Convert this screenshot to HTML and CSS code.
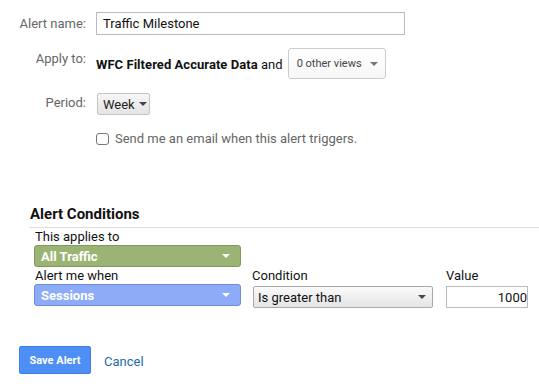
FILE: index.html
```html
<!DOCTYPE html>
<html>
<head>
<meta charset="utf-8">
<link rel="stylesheet" href="styles.css">
</head>
<body>
<div class="form">
  <div class="row row-name">
    <div class="label">Alert name:</div>
    <div class="text-input">Traffic Milestone</div>
  </div>
  <div class="row row-apply">
    <div class="label">Apply to:</div>
    <div class="value"><b>WFC Filtered Accurate Data</b> and</div>
    <div class="views-btn">0 other views <span class="caret caret-gray"></span></div>
  </div>
  <div class="row row-period">
    <div class="label">Period:</div>
    <div class="week-btn">Week <span class="caret caret-dark"></span></div>
  </div>
  <div class="row row-check">
    <div class="label"></div>
    <span class="checkbox"></span>
    <span class="check-text">Send me an email when this alert triggers.</span>
  </div>
</div>

<div class="conditions">
  <div class="cond-title">Alert Conditions</div>
  <div class="cond-grid">
    <div class="cond-label">This applies to</div>
    <div class="empty"></div>
    <div class="empty"></div>
    <div class="pill pill-green">All Traffic <span class="caret caret-white"></span></div>
    <div class="empty"></div>
    <div class="empty"></div>
    <div class="cond-label">Alert me when</div>
    <div class="cond-label cond-label-tight">Condition</div>
    <div class="cond-label cond-label-value">Value</div>
    <div class="pill pill-blue">Sessions <span class="caret caret-white"></span></div>
    <div class="select">Is greater than <span class="caret caret-dark"></span></div>
    <div class="num-input">1000</div>
  </div>
</div>

<div class="actions">
  <div class="save-btn">Save Alert</div>
  <div class="cancel">Cancel</div>
</div>
</body>
</html>
```

FILE: styles.css
```css
body {
  margin: 0;
  font-family: Roboto, "Liberation Sans", Arial, sans-serif;
  font-size: 13px;
  color: #222;
  background: #fff;
}

.form {
  padding-top: 12px;
}

.row {
  display: flex;
  align-items: flex-start;
}

.label {
  width: 86px;
  margin-right: 10px;
  text-align: right;
  color: #666;
  font-size: 13px;
  flex: none;
}

.row-name .label { padding-top: 4px; }

.text-input {
  box-sizing: border-box;
  width: 309px;
  height: 23px;
  border: 1px solid #bbb;
  padding: 3px 6px 0;
  font-size: 13px;
  color: #111;
}

.row-apply {
  margin-top: 13px;
  align-items: center;
}
.row-apply .label { align-self: flex-start; padding-top: 3px; }

.value {
  font-size: 13px;
  color: #111;
  padding-top: 1px;
  letter-spacing: 0.05px;
}
.value b { font-weight: 700; }

.views-btn {
  box-sizing: border-box;
  margin-left: 5px;
  width: 98px;
  height: 31px;
  border: 1px solid #ccc;
  border-radius: 3px;
  background: linear-gradient(#fff, #f7f7f7);
  display: flex;
  align-items: center;
  justify-content: space-between;
  padding: 0 7px 0 8px;
  font-size: 11px;
  color: #444;
}

.row-period {
  margin-top: 14px;
}
.row-period .label { padding-top: 2px; }

.week-btn {
  box-sizing: border-box;
  margin-left: 1px;
  width: 53px;
  height: 22px;
  border: 1px solid #c4c4c4;
  border-radius: 2px;
  background: linear-gradient(#f6f6f6, #e4e4e4);
  display: flex;
  align-items: center;
  gap: 4px;
  padding-left: 5px;
  font-size: 13px;
  color: #222;
}

.row-check {
  margin-top: 16px;
  align-items: center;
}

.checkbox {
  box-sizing: border-box;
  width: 13px;
  height: 12px;
  border: 1px solid #777;
  border-radius: 3px;
  background: #fff;
  margin-right: 6px;
  flex: none;
}

.check-text {
  color: #666;
  font-size: 13px;
}

.caret {
  display: inline-block;
  width: 0;
  height: 0;
  border-left: 4px solid transparent;
  border-right: 4px solid transparent;
  border-top: 4px solid #777;
}
.caret-gray { border-top-color: #777; }
.caret-dark { border-top-color: #445; }
.caret-white { border-top-color: #fff; }

.conditions {
  margin-left: 29px;
  margin-top: 60px;
}

.cond-title {
  font-weight: 700;
  font-size: 15px;
  line-height: 17px;
  color: #111;
  padding-left: 1px;
  padding-bottom: 4px;
  border-bottom: 1px solid #ddd;
}

.cond-grid {
  display: grid;
  grid-template-columns: 207px 180px 83px;
  column-gap: 12px;
  padding-left: 5px;
  align-items: start;
}

.cond-label {
  font-size: 13px;
  line-height: 17px;
  color: #111;
  padding-left: 1px;
}
.cond-label-tight {
  padding-left: 0;
  margin-left: -1px;
}
.cond-label-value {
  padding-left: 0;
  margin-left: 1px;
}

.pill {
  box-sizing: border-box;
  height: 22px;
  border-radius: 3px;
  display: flex;
  align-items: center;
  justify-content: space-between;
  padding: 0 10px 0 6px;
  color: #fff;
  font-weight: 700;
  font-size: 13px;
}
.pill-green {
  background: #9bb474;
  border: 1px solid #7f9a5d;
}
.pill-blue {
  background: #8eabf7;
  border: 1px solid #6e8bd8;
}

.select {
  box-sizing: border-box;
  height: 22px;
  margin-top: 2px;
  border: 1px solid #aaa;
  border-radius: 2px;
  background: linear-gradient(#fafafa, #e4e4e4);
  display: flex;
  align-items: center;
  justify-content: space-between;
  padding: 0 6px 0 4px;
  font-size: 13px;
  color: #111;
}

.num-input {
  box-sizing: border-box;
  height: 22px;
  margin-top: 2px;
  margin-left: 1px;
  border: 1px solid #bbb;
  text-align: right;
  padding: 3px 0 0 0;
  font-size: 13px;
  color: #111;
}

.actions {
  display: flex;
  align-items: center;
  margin: 38px 0 0 19px;
}

.save-btn {
  box-sizing: border-box;
  width: 72px;
  height: 28px;
  border-radius: 2px;
  border: 1px solid #3f7fea;
  background: #4d8ff5;
  color: #fff;
  font-weight: 700;
  font-size: 11px;
  display: flex;
  align-items: center;
  justify-content: center;
}

.cancel {
  margin-left: 13px;
  color: #1f6ab0;
  font-size: 13px;
  padding-top: 2px;
}
```
